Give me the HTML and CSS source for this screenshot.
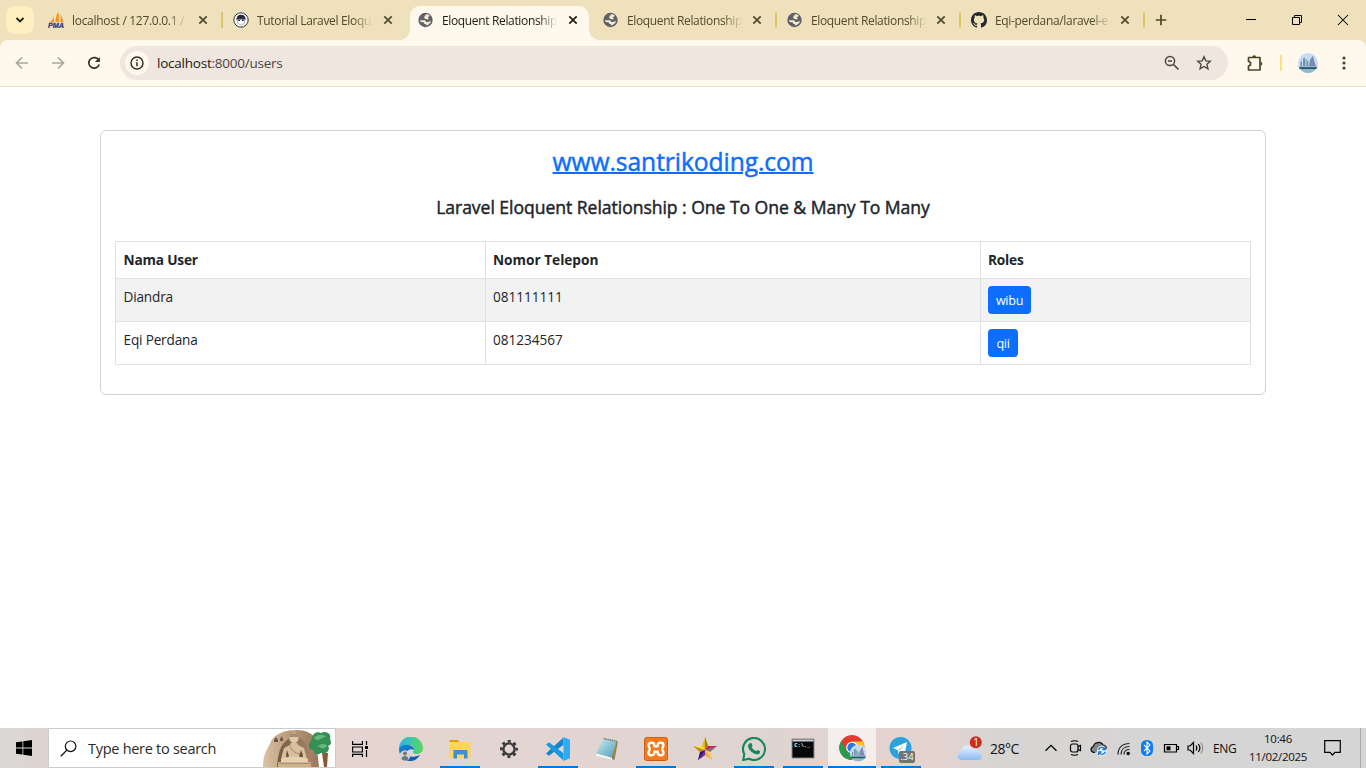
FILE: index.html
```html
<!DOCTYPE html>
<html lang="en">
<head>
<meta charset="utf-8">
<title>Eloquent Relationship</title>
<link rel="stylesheet" href="styles.css">
</head>
<body>
<svg width="0" height="0" class="defs">
  <defs>
    <symbol id="x" viewBox="0 0 10 10"><path d="M1.3 1.3l7.4 7.4M8.7 1.3L1.3 8.7" fill="none" stroke="currentColor" stroke-width="1.7"/></symbol>
    <symbol id="globe" viewBox="0 0 16 16"><circle cx="7.500" cy="8" r="7.200" fill="#5f6368"/><path d="M8.200 2.300c1.300 0 2.600.5 3.500 1.300-.2 1.200-1.500 1-1.700 1.900-.1.600.9.700.6 1.400-.4.800-1.700.5-2.400.2-.9-.4-2-.6-2-1.700 0-1.500 1.400-1.900 2-3.100zM1.900 8.300h3.900c1.300 0 2.400.6 2.400 1.700h1.900c.9 0 1.200-.8 2.900-1-.5 2.400-2.700 4.300-5.100 4.500v-1.600H6.900c-1-.1-1.100-.8-1-1.600H4.100c-1.200 0-2.100-.7-2.200-2z" fill="#f3ead1"/></symbol>
    <linearGradient id="edgeA" x1="0" y1="0" x2="1" y2="1"><stop offset="0" stop-color="#1687d9"/><stop offset="1" stop-color="#0b54a8"/></linearGradient>
    <linearGradient id="edgeB" x1="0" y1="0" x2="1" y2="0"><stop offset="0" stop-color="#25b7ed"/><stop offset="1" stop-color="#5bd65c"/></linearGradient>
    <linearGradient id="stone" x1="0" y1="0" x2="1" y2="0"><stop offset="0" stop-color="#dcc3a2"/><stop offset=".5" stop-color="#b8987a"/><stop offset="1" stop-color="#9a775a"/></linearGradient>
    <linearGradient id="cave" x1="0" y1="0" x2="1" y2="0"><stop offset="0" stop-color="#755943"/><stop offset="1" stop-color="#a58468"/></linearGradient>
    <linearGradient id="cloud" x1="0" y1="0" x2="0" y2="1"><stop offset="0" stop-color="#e8f3ff"/><stop offset="1" stop-color="#8db9f2"/></linearGradient>
    <linearGradient id="note" x1="0" y1="0" x2="1" y2="1"><stop offset="0" stop-color="#c9edf3"/><stop offset="1" stop-color="#4d9fb5"/></linearGradient>
    <symbol id="city" viewBox="0 0 20 20"><circle cx="10" cy="10" r="10" fill="#c4ddf6"/><path d="M.5 13h19a10 10 0 0 1-19 0z" fill="#8fb8cf"/><path d="M2.500 13V9L4 8v5zM5 13V5.500l2-1V13zM11 13l1-6 3-4.500 1.500 6.500 1.500 4z" fill="#8088b0"/><path d="M7.500 13V6.500l1.200-1V13z" fill="#52b991"/><path d="M9.300 13V8h1v5z" fill="#5574a8"/><path d="M1 14.300h18l-.6 1.700H1.700z" fill="#2b5261"/></symbol>
  </defs>
</svg>

<header class="strip">
  <button class="tab-search"><svg width="10" height="8" viewBox="0 0 10 8"><path d="M1.500 2L5 5.500 8.500 2" fill="none" stroke="#222014" stroke-width="1.800"/></svg></button>
  <div class="tabs">
    <div class="tab sep">
      <svg class="fav" viewBox="0 0 16 16"><path d="M6 1C6.500 5 5 8 1 10.500h5zM10 0c-1.500 3-2.600 6-2.600 10h3.400C11.600 7 11.500 3 10 0zM12 2c1 3 1.100 6 0 8l3.500.3C15 7 13.800 4 12 2z" fill="#f7962d"/><text x="0" y="15.600" font-family="Liberation Sans" font-size="6.400" font-weight="bold" font-style="italic" fill="#3b4285" stroke="#3b4285" stroke-width=".3" textLength="16" lengthAdjust="spacingAndGlyphs">PMA</text></svg>
      <span class="title t1">localhost / 127.0.0.1 /</span><svg class="x"><use href="#x"/></svg>
    </div>
    <div class="tab">
      <svg class="fav" viewBox="0 0 16 16"><circle cx="8" cy="8" r="7.200" fill="#f9f9fa" stroke="#35354a" stroke-width="1"/><path d="M3.800 6C4 3.600 5.700 2.800 8 2.800s4 .8 4.200 3.200z" fill="#26263a"/><path d="M3.300 6h9.400v1.700H3.300z" fill="#38384c"/><path d="M4.500 7.700v3.300L8 13.200l3.500-2.200V7.700" fill="#fff" stroke="#888" stroke-width=".6"/><path d="M5.300 8.400h1.700M9 8.400h1.700" stroke="#222" stroke-width="1.300"/></svg>
      <span class="title t2">Tutorial Laravel Eloqu</span><svg class="x"><use href="#x"/></svg>
    </div>
    <div class="tab active">
      <svg class="fav"><use href="#globe"/></svg><span class="title t3">Eloquent Relationship</span><svg class="x"><use href="#x"/></svg>
    </div>
    <div class="tab sep">
      <svg class="fav"><use href="#globe"/></svg><span class="title t3">Eloquent Relationship</span><svg class="x"><use href="#x"/></svg>
    </div>
    <div class="tab sep">
      <svg class="fav"><use href="#globe"/></svg><span class="title t3">Eloquent Relationship</span><svg class="x"><use href="#x"/></svg>
    </div>
    <div class="tab sep">
      <svg class="fav" viewBox="0 0 16 16"><path fill="#24292f" d="M8 0C3.580 0 0 3.580 0 8c0 3.540 2.290 6.530 5.470 7.590.4.070.55-.17.55-.38 0-.19-.01-.82-.01-1.490-2.010.37-2.530-.49-2.690-.94-.09-.23-.48-.94-.82-1.130-.28-.15-.68-.52-.01-.53.63-.01 1.080.58 1.230.82.72 1.210 1.870.87 2.330.66.07-.52.28-.87.51-1.070-1.780-.2-3.640-.89-3.640-3.950 0-.87.31-1.590.82-2.150-.08-.2-.36-1.020.08-2.120 0 0 .67-.21 2.200.82.64-.18 1.320-.27 2-.27s1.360.09 2 .27c1.530-1.040 2.200-.82 2.200-.82.44 1.100.16 1.920.08 2.120.51.56.82 1.270.82 2.150 0 3.070-1.870 3.750-3.650 3.950.29.25.54.73.54 1.480 0 1.070-.01 1.930-.01 2.200 0 .21.15.46.55.38A8.010 8.010 0 0 0 16 8c0-4.420-3.580-8-8-8z"/></svg>
      <span class="title t4">Eqi-perdana/laravel-e</span><svg class="x"><use href="#x"/></svg>
    </div>
  </div>
  <svg class="plus" width="12" height="12" viewBox="0 0 12 12"><path d="M6 .800v10.400M.800 6h10.400" stroke="#4c4728" stroke-width="1.700"/></svg>
  <div class="win">
    <svg width="46" height="40" viewBox="0 0 46 40"><path d="M18 19.500h10" stroke="#000"/></svg>
    <svg width="46" height="40" viewBox="0 0 46 40"><path d="M18.500 17.500h7v7h-7zM20.500 17.500v-2h7v7h-2" fill="none" stroke="#000"/></svg>
    <svg width="46" height="40" viewBox="0 0 46 40"><path d="M18 15l10 10M28 15L18 25" stroke="#000" stroke-width="1.050"/></svg>
  </div>
</header>

<nav class="toolbar">
  <svg class="nav" viewBox="0 0 36 36"><path d="M24 18H12.800M18 12.500L12.500 18l5.500 5.500" fill="none" stroke="#aaa596" stroke-width="1.600"/></svg>
  <svg class="nav" viewBox="0 0 36 36"><path d="M12 18h11.200M18 12.500l5.500 5.500-5.500 5.500" fill="none" stroke="#aaa596" stroke-width="1.600"/></svg>
  <svg class="nav" viewBox="0 0 36 36"><path d="M22.900 15.500A5.300 5.300 0 1 0 23.200 19.500" fill="none" stroke="#3b3620" stroke-width="1.700"/><path d="M23.900 11.900v5h-5z" fill="#3b3620"/></svg>
  <div class="omnibox">
    <span class="info"><svg width="14" height="14" viewBox="0 0 14 14"><circle cx="7" cy="7" r="6" fill="none" stroke="#2f2b1e" stroke-width="1.400"/><path d="M7 6.200v4M7 3.500v1.500" stroke="#2f2b1e" stroke-width="1.500"/></svg></span>
    <span class="url"><b>localhost</b>:8000/users</span>
    <svg class="mag" viewBox="0 0 16 16"><circle cx="6" cy="6" r="4.600" fill="none" stroke="#4b4743" stroke-width="1.500"/><path d="M9.500 9.500l5 5M4 6h4" stroke="#4b4743" stroke-width="1.600"/></svg>
    <svg class="star" viewBox="0 0 16 16"><path d="M8 1.800l1.850 4.100 4.450.45-3.350 3 1 4.400L8 11.450l-3.950 2.300 1-4.400-3.350-3 4.450-.45z" fill="none" stroke="#4b4743" stroke-width="1.400"/></svg>
  </div>
  <svg class="ext" viewBox="0 0 18 18"><path d="M2.500 3.500h11.500v12.500H2.500v-4c2.800-.3 2.800-4.200 0-4.500z" fill="none" stroke="#4c4525" stroke-width="1.700" stroke-linejoin="round"/><path d="M6.300 3.200a1.900 1.900 0 0 1 3.800 0M14.300 7.700a2 2 0 0 1 0 4" fill="#4c4525"/></svg>
  <i class="bar"></i>
  <svg class="avatar"><use href="#city"/></svg>
  <svg class="dots" viewBox="0 0 4 14"><circle cx="2" cy="2" r="1.600"/><circle cx="2" cy="7" r="1.600"/><circle cx="2" cy="12" r="1.600"/></svg>
</nav>

<main class="page">
  <section class="card">
    <h3><a href="#">www.santrikoding.com</a></h3>
    <h5>Laravel Eloquent Relationship : One To One &amp; Many To Many</h5>
    <table>
      <colgroup><col class="c1"><col class="c2"><col class="c3"></colgroup>
      <thead><tr><th>Nama User</th><th>Nomor Telepon</th><th>Roles</th></tr></thead>
      <tbody>
        <tr class="odd"><td>Diandra</td><td>081111111</td><td><button class="btn b1">wibu</button></td></tr>
        <tr><td>Eqi Perdana</td><td>081234567</td><td><button class="btn b2">qii</button></td></tr>
      </tbody>
    </table>
  </section>
</main>

<footer class="taskbar">
  <div class="start"><svg width="16" height="16" viewBox="0 0 16 16"><path d="M0 2.300l6.500-.9v6.100H0zM7.300 1.200L16 0v7.500H7.300zM0 8.400h6.500v6.200L0 13.700zM7.300 8.400H16V16l-8.700-1.200z"/></svg></div>
  <div class="search">
    <svg width="17" height="17" viewBox="0 0 17 17"><circle cx="10.600" cy="6.300" r="5.300" fill="none" stroke="#111" stroke-width="1.200"/><path d="M6.800 10.100L.8 16.200" stroke="#111" stroke-width="1.300"/></svg>
    <span>Type here to search</span>
    <svg class="buddha" viewBox="0 0 70 38"><path d="M0 38C0 24 5 20 8 12 12 4 24 1 34 1c8 0 15 3 19 9l3 28z" fill="url(#stone)"/><path d="M14 38c1-14 4-22 9-26 5-5 13-5 18 0 5 5 7 17 7 26z" fill="url(#cave)"/><path d="M11 11l2-3 2 3v2h-4zM17 10l2-3 1 3v2h-3z" fill="#6f5643"/><circle cx="31" cy="9.500" r="4.500" fill="#e0c9a9"/><path d="M26.500 8c0-5 9-5 9 0z" fill="#a88c6e"/><circle cx="31" cy="3.500" r="1.800" fill="#c2a684"/><path d="M28 14h6l1 2 6 3 3 11c-8 3-17 3-26 0l3-11 6-3z" fill="#d9c09d"/><path d="M24 21l2 6-2 3-1-4zM38 21l-2 6 3 3 1-4z" fill="#6d513b"/><path d="M27 17c1 4 5 7 10 8" fill="none" stroke="#a38465"/><path d="M18 30c8-3 20-3 27 0v3H18z" fill="#e6d2b3"/><path d="M15 33h33v5H15z" fill="#ccb18c"/><path d="M15 34.500h33" stroke="#ad9170"/><path d="M59 24l2 14h3l1-14z" fill="#8b5a35"/><path d="M49 10c0-5 5-8 9-6 5-3 11 1 9 6 2 4 1 6-2 7 3 4-2 9-7 7-4 3-8 0-7-3-6 0-7-5-2-11z" fill="#358f56"/><path d="M51 9c3-4 10-4 12-1-4 0-5 3-8 3-2 0-3-1-4-2zM55 17c3-2 7-3 9 0-2 3-6 3-9 0z" fill="#67b77a"/></svg>
  </div>
  <div class="apps">
    <div class="app view"><svg viewBox="0 0 24 24"><path d="M4.600 4v3.400h9.800V4M4.600 20v-2.600h9.800V20M4.600 10h9.800v5H4.600zM18.500 4v4M18.500 13v7" fill="none" stroke="#000" stroke-width="1.200"/><path d="M17 9h3v3h-3z"/></svg></div>
    <div class="app"><svg viewBox="0 0 24 24"><path d="M0 12a12 12 0 0 1 24-1c0 4-3 6-6 6-4 0-5-2-3-4 0-3-2-5-5-5-4 0-8 2-10 5z" fill="url(#edgeB)"/><path d="M0 12c1-3 5-5 9-4 5 .500 6 3 6 5-3-2-7 0-7 3 1 4 6 5 13 2-2 4-7 7-12 6C4 23 0 18 0 12z" fill="url(#edgeA)"/><circle cx="6" cy="18.500" r="5.300" fill="#d4d4d4"/><circle cx="6" cy="16.500" r="2" fill="#777"/><path d="M2.500 22c0-4 7-4 7 0-2 2-5 2-7 0z" fill="#777"/></svg></div>
    <div class="app run"><svg viewBox="0 0 24 24"><path d="M1.500 3h8l2 2h-10z" fill="#d99a0b"/><path d="M1.500 5h21v16h-21z" fill="#ffd45b"/><path d="M5.500 13h14v8.500h-3.500v-4H9v4H5.500z" fill="#3a91d5"/></svg></div>
    <div class="app"><svg viewBox="0 0 24 24"><circle cx="12" cy="12" r="5.600" fill="none" stroke="#3b3b3b" stroke-width="2.400"/><circle cx="12" cy="12" r="7.700" fill="none" stroke="#3b3b3b" stroke-width="2.600" stroke-dasharray="3 3.047" stroke-dashoffset="1.500"/></svg></div>
    <div class="app run"><svg viewBox="0 0 24 24"><path d="M17.500.500v7.200L3 18.700l-3-2.300z" fill="#1487ca"/><path d="M0 7.500l3-2.300 14.500 11.100v7.200z" fill="#1998e4"/><path d="M17.500 0L24 2.800v18.400L17.500 24z" fill="#2fabf4"/></svg></div>
    <div class="app"><svg viewBox="0 0 24 24"><path d="M9 1.500l14 3L19.500 23 15 21.500z" fill="#9b834a"/><path d="M8.500 2l13 2.500-4.700 16.300L1 16.500z" fill="url(#note)"/><path d="M1 16.500l16 4.300v2L1 18.800z" fill="#f5f5f5"/><path d="M8.500 1.500l13.500 2.700" stroke="#777" stroke-width="1.300" stroke-dasharray="1.200 1"/></svg></div>
    <div class="app run"><svg viewBox="0 0 24 24"><rect x=".5" y=".5" width="23" height="23" rx="2" fill="#f27b20" stroke="#c85d14"/><path d="M10.300 9.300V8c0-3-5.800-3-5.800 0 0 1.800 1.300 2.300 1.300 4s-1.300 2.200-1.300 4c0 3 5.800 3 5.800 0v-1.300h3.400V16c0 3 5.800 3 5.800 0 0-1.800-1.300-2.300-1.300-4s1.300-2.200 1.300-4c0-3-5.800-3-5.800 0v1.300z" fill="none" stroke="#fff" stroke-width="2.300" stroke-linejoin="round"/></svg></div>
    <div class="app"><svg viewBox="0 0 24 24"><path d="M12 0l3 9-3 4-3-4z" fill="#e5bd1b"/><path d="M12 0l3 9-3 4z" fill="#a67b11"/><path d="M0 9h9l3 4-5 2z" fill="#f4df45"/><path d="M0 9l7 6 5-2z" fill="#bd8c18"/><path d="M24 9h-9l-3 4 5 1z" fill="#d51e57"/><path d="M24 9l-7 6-5-2z" fill="#777"/><path d="M5 23l2-8 5-2v5z" fill="#371160"/><path d="M5 23l7-10v5z" fill="#6d2fa5"/><path d="M19 23l-2-8-5-2v5z" fill="#f1a72b"/><path d="M19 23l-2-8-5-2z" fill="#f8cc76"/></svg></div>
    <div class="app run"><svg viewBox="0 0 24 24"><path d="M2.300 17.200A11 11 0 1 1 7 21.800L1.200 23z" fill="none" stroke="#168956" stroke-width="2.100"/><path d="M8 6.200c.5-.4 1.400-.4 1.700.3l.8 1.900c.2.500-.8 1.300-.8 1.700.9 1.900 2.300 3.200 4.200 4 .6.200 1.200-1.300 1.700-1.100l2.200 1.100c.6.400.2 1.700-.3 2.300-1.300 1.300-3.600 1.200-6.200-.3-2.700-1.500-5.200-4.400-5.300-7 0-1.200.7-2.200 2-2.900z" fill="#168956"/></svg></div>
    <div class="app run"><svg viewBox="0 0 24 24"><path d="M1 2h22v19H1z" fill="#080808" stroke="#888" stroke-width="1"/><path d="M1.500 2.500h21v2h-21z" fill="#c9cfd6"/><text x="3.300" y="10.200" font-family="Liberation Mono" font-size="5.300" font-weight="bold" fill="#fff">C:\._</text></svg></div>
    <div class="app run on"><svg viewBox="0 0 26 26"><circle cx="12.500" cy="12" r="12" fill="#e33b2e"/><path d="M12.500 12h11.900a12 12 0 0 1-11.900 12l5-9z" fill="#fbbd12"/><path d="M12.500 6.300h10.500A12 12 0 0 1 13 24l5.200-9z" fill="#fcc61b"/><path d="M2.200 6l5.200 9 8 2-3 7C2 24-3 13 2.200 6z" fill="#299b4b"/><circle cx="12.500" cy="12" r="5.600" fill="#fff"/><circle cx="12.500" cy="12" r="4.500" fill="#2879e8"/><use href="#city" x="10.500" y="9.500" width="16" height="16"/></svg></div>
    <div class="app run tele"><svg viewBox="0 0 24 24"><circle cx="11.500" cy="11" r="11" fill="#2ba3dd"/><path d="M4 11L18 5l-2.500 13-4-3-2 2-.6-3.800z" fill="#fff"/><path d="M9 13l6-5-4 6z" fill="#a9d5e9"/></svg><span class="badge">.34</span></div>
  </div>
  <div class="weather"><svg width="26" height="25" viewBox="0 0 26 25"><path d="M4.500 24C-1 23-.5 17 4 16.500 3.500 10 12 7 15.500 13c5-1 7 2 6.500 4 4 1 3.500 6 0 7z" fill="url(#cloud)"/><circle cx="18.800" cy="6.300" r="6" fill="#cc2d20"/><text x="16.200" y="10" font-family="Open Sans" font-size="10" fill="#fff">1</text></svg><span>28°C</span></div>
  <div class="tray">
    <svg viewBox="0 0 24 24"><path d="M6.500 14.800L12 9.300l5.500 5.500" fill="none" stroke="#000" stroke-width="1.300"/></svg>
    <svg viewBox="0 0 24 24"><rect x="7.500" y="8" width="7.500" height="8" rx="2" fill="none" stroke="#000" stroke-width="1.200"/><path d="M15 10.500l2.500-1v5l-2.500-1M8 5.500c2.300-1 4.700-1 7 0M8 18.500c2.300 1 4.700 1 7 0" fill="none" stroke="#000" stroke-width="1.200"/></svg>
    <svg viewBox="0 0 24 24"><path d="M8 16.500c-5 0-5-5-1.500-6C7 6 14 5 16 9c3 0 4 3 3 5" fill="#858585" stroke="#111" stroke-width="1.200"/><circle cx="15" cy="14.800" r="5" fill="#eef5fb"/><path d="M11.500 14a3.500 3.500 0 0 1 6-1.500M18.500 15.600a3.500 3.500 0 0 1-6 1.500M18.300 10.500v3h-3M11.700 19v-3h3" fill="none" stroke="#1675c9" stroke-width="1.300"/></svg>
    <svg viewBox="0 0 24 24"><path d="M7 18.500C7 11.500 11.500 7.500 18.500 7.500M10 18.500c0-5 3.500-8 8.500-8M13 18.500c0-3 2-5 5.500-5" fill="none" stroke="#222" stroke-width="1.200"/><circle cx="17.200" cy="17.500" r="1.700"/></svg>
    <svg viewBox="0 0 24 24"><rect x="6" y="4" width="12" height="16" rx="5.500" fill="#0a7df0"/><path d="M9 9l6 6-3 3V6l3 3-6 6" fill="none" stroke="#fff" stroke-width="1.100"/></svg>
    <svg viewBox="0 0 24 24"><path d="M5.500 8.500h12v7.500h-12zM17.500 10.500h2v3h-2" fill="none" stroke="#000" stroke-width="1.200"/><path d="M7.500 10.300h4v4h-4z"/></svg>
    <svg viewBox="0 0 24 24"><path d="M5 10h2l3.500-3.500v11L7 14H5zM13 9.500c1 1.500 1 3.500 0 5M15.300 8c2 2.500 2 5.500 0 8" fill="none" stroke="#000" stroke-width="1.200"/><path d="M17.800 6.500c2.500 3.500 2.500 7.500 0 11" fill="none" stroke="#888" stroke-width="1.100"/></svg>
  </div>
  <span class="lang">ENG</span>
  <div class="clock"><span>10:46</span><span>11/02/2025</span></div>
  <svg class="bell" width="17" height="16" viewBox="0 0 17 16"><path d="M.700.700h15.600v11.600H11L8.500 15 6 12.300H.700z" fill="none" stroke="#000" stroke-width="1.200"/></svg>
  <i class="peek"></i>
</footer>
</body>
</html>
```
FILE: styles.css
```css
* { box-sizing: border-box; }
body { margin: 0; width: 1366px; height: 768px; overflow: hidden; display: flex; flex-direction: column; background: #fff; font-family: "Open Sans", "Noto Sans", sans-serif; color: #212529; }
button { border: 0; padding: 0; font-family: inherit; }
svg { display: block; flex: none; }
.defs { position: absolute; }

.strip { height: 40px; flex: none; display: flex; background: #eee1bb; }
.tab-search { width: 28px; height: 28px; margin: 6px 8px 0 6px; border-radius: 9px; background: #ffefc0; display: flex; align-items: center; justify-content: center; }
.tabs { display: flex; }
.tab { position: relative; width: 184px; height: 40px; padding-left: 9px; display: flex; align-items: center; color: #504b2d; }
.tab:nth-child(1) { padding-left: 6px; }
.tab:nth-child(2) { padding-left: 7px; }
.tab:nth-child(3) { padding-left: 8px; }
.tab.sep::after { content: ""; width: 2px; height: 16px; margin-left: 13px; background: #e0c766; }
.fav { width: 16px; height: 16px; margin-right: 8px; }
.title { width: 115px; margin-top: 2px; font-size: 12px; line-height: 18px; height: 18px; white-space: nowrap; -webkit-mask-image: linear-gradient(90deg, #000 84%, transparent 100%); mask-image: linear-gradient(90deg, #000 84%, transparent 100%); }
.t1 { letter-spacing: -.3px; }
.t2 { letter-spacing: -.33px; }
.t3 { letter-spacing: -.35px; }
.t4 { letter-spacing: -.33px; }
.x { width: 10px; height: 10px; margin-left: 11px; }
.tab:nth-child(n+4) .x { margin-left: 10px; }
.active { width: 179px; height: 34px; margin: 6px 5px 0 0; padding-bottom: 6px; background: #fff8ec; border-radius: 10px 10px 0 0; color: #1f1c10; }
.active::before, .active::after { content: ""; position: absolute; bottom: 0; width: 10px; height: 10px; }
.active::before { left: -10px; background: radial-gradient(circle at 0 0, transparent 9.5px, #fff8ec 10px); }
.active::after { right: -10px; background: radial-gradient(circle at 100% 0, transparent 9.5px, #fff8ec 10px); }
.plus { margin: 14px 0 0 9px; }
.win { display: flex; margin-left: auto; }

.toolbar { height: 47px; flex: none; display: flex; align-items: center; padding-left: 4px; background: #fff8ec; border-bottom: 1px solid #ece3d3; border-radius: 8px 8px 0 0; position: relative; }
.toolbar::before { content: ""; position: absolute; left: 0; right: 0; top: 0; height: 8px; z-index: -1; background: #eee1bb; }
.nav { width: 36px; height: 36px; }
.omnibox { width: 1108px; height: 34px; margin-left: 8px; border-radius: 17px; background: #efe6e0; display: flex; align-items: center; padding: 0 16px 0 5px; }
.info { width: 24px; height: 24px; border-radius: 50%; background: #fff8ec; display: flex; align-items: center; justify-content: center; }
.url { margin-left: 8px; flex: 1; font-size: 13.5px; letter-spacing: -.23px; color: #4c4742; }
.url b { font-weight: 400; color: #1f1b16; }
.mag { width: 16px; height: 16px; margin-right: 16px; }
.star { width: 16px; height: 16px; }
.ext { width: 18px; height: 18px; margin-left: 18px; }
.bar { width: 2px; height: 16px; margin-left: 16px; background: #fbe183; }
.avatar { width: 20px; height: 20px; margin-left: 16px; }
.dots { width: 4px; height: 14px; margin-left: 24px; fill: #4c4525; }

.page { flex: 1; padding: 43px 100px 0; }
.card { height: 265px; border: 1px solid #d1d2d3; border-radius: 6px; padding: 14px 14px 0; }
h3 { margin: 0; text-align: center; font-size: 24.6px; line-height: 34px; font-weight: 400; letter-spacing: -.07px; -webkit-text-stroke: .45px currentColor; }
h3 a { color: #0d6efd; text-decoration: underline; text-decoration-thickness: 2px; }
h5 { margin: 17px 0 0; height: 23px; text-align: center; font-size: 17.6px; line-height: 22px; font-weight: 400; letter-spacing: -.05px; white-space: nowrap; -webkit-text-stroke: .45px currentColor; }
table { width: 1136px; margin-top: 22px; border-collapse: collapse; table-layout: fixed; line-height: 22px; }
.c1 { width: 370px; } .c2 { width: 495px; } .c3 { width: 270px; }
th, td { border: 1px solid #dee2e6; padding: 7px 7px 0 8px; text-align: left; vertical-align: top; }
th { height: 37px; font-weight: 700; font-size: 13.7px; letter-spacing: -.2px; }
td { height: 43px; font-size: 13.6px; letter-spacing: -.17px; }
td:nth-child(2) { letter-spacing: -.03px; }
th:nth-child(2) { letter-spacing: -.02px; }
td:first-child, th:first-child { padding-left: 7.5px; }
td:nth-child(n+2), th:nth-child(n+2) { padding-left: 7px; }
.odd td { background: #f2f2f2; }
.btn { display: block; height: 28px; border-radius: 4px; background: #0d6efd; color: #fff; font-size: 12.600px; line-height: 27px; letter-spacing: -.3px; }
.b1 { width: 43px; } .b2 { width: 30px; }

.taskbar { height: 40px; flex: none; display: flex; align-items: center; color: #111; background: linear-gradient(90deg, #d9d9d8 0, #e0d2cf 48px, #e5d5d1 340px, #e2d5d1 600px, #dfd4d1 760px, #e6d3cf 930px, #d7d5d4 990px, #d5d5d5 1366px); }
.start { width: 48px; display: flex; padding-left: 16px; }
.search { width: 288px; height: 40px; background: #fff; border: 1px solid #cbcbcb; display: flex; align-items: center; padding-left: 11px; font-size: 14.5px; }
.search span { width: 175px; margin-left: 11px; letter-spacing: -.28px; white-space: nowrap; color: #2b2b2b; }
.buddha { width: 70px; height: 38px; }
.apps { display: flex; gap: 1px; }
.app { width: 48px; height: 40px; display: flex; align-items: center; justify-content: center; padding-top: 1px; position: relative; }
.view { width: 50px; padding-right: 2px; }
.app svg { width: 24px; height: 24px; }
.run::after { content: ""; position: absolute; left: 4px; right: 4px; bottom: 0; height: 2px; background: #0078d7; }
.on { background: #f4efed; }
.on::after { left: 0; right: 0; }
.app.on svg { width: 27px; height: 27px; }
.badge { position: absolute; left: 22px; top: 23px; width: 16px; height: 12px; border-radius: 2px; background: #737373; color: #fff; font-size: 9.500px; line-height: 12px; text-align: center; }
.weather { display: flex; align-items: center; margin-left: 32px; width: 82px; font-size: 14px; }
.weather span { margin-left: 7px; letter-spacing: -.5px; }
.tray { display: flex; }
.tray svg { width: 24px; height: 24px; }
.lang { width: 26px; margin-left: 6px; font-size: 12px; letter-spacing: -.4px; }
.clock { width: 70px; margin-left: 4px; display: flex; flex-direction: column; align-items: center; font-size: 11.500px; line-height: 18px; letter-spacing: -.3px; }
.bell { margin: 0 0 0 11px; }
.peek { width: 1px; height: 40px; margin-left: 19px; background: #aaa; }
```
